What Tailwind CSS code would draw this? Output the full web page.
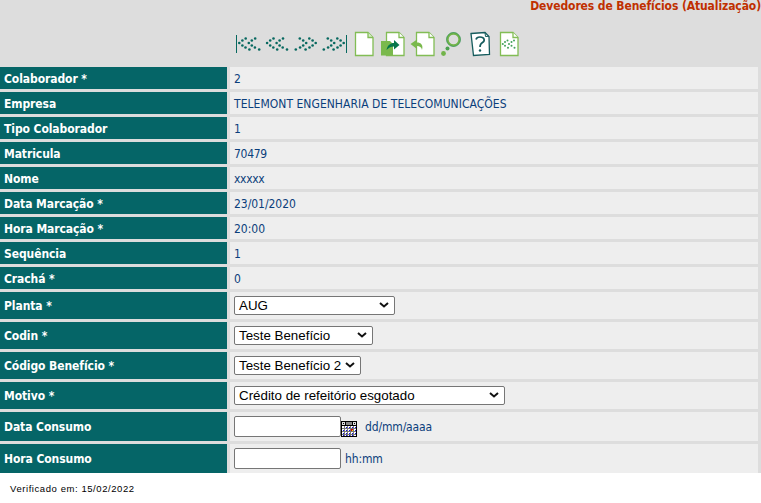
<!DOCTYPE html>
<html lang="pt-BR">
<head>
<meta charset="utf-8">
<title>Devedores de Benefícios</title>
<script src="https://cdn.jsdelivr.net/npm/@tailwindcss/browser@4"></script>
</head>
<body class="h-[503px] w-[761px] overflow-hidden bg-white font-['DejaVu_Sans_Condensed','DejaVu_Sans',sans-serif] text-xs leading-4 [font-stretch:condensed]">
<main class="flex h-[473px] flex-col bg-[#dddddd]">
  <h1 class="flex h-[29px] shrink-0 justify-end whitespace-nowrap font-bold leading-3 text-[#c03000]"><span class="tracking-[-0.1px]">Devedores de Benefícios (Atualização)</span></h1>
  <nav class="flex h-[38px] shrink-0 items-start pl-[235px]">
    <svg class="h-8 w-[290px] shrink-0" viewBox="235 29 290 32" fill="none">
      <path d="M236.500 35v18M346.500 35v18" stroke="#07685f"/>
      <g fill="#07685f">
        <g id="dots"><circle cx="245.700" cy="38.500" r="1.300"/><circle cx="242.400" cy="40.500" r="1.300"/><circle cx="239.300" cy="43" r="1.300"/><circle cx="242.400" cy="45.500" r="1.300"/><circle cx="245.500" cy="47.500" r="1.300"/><circle cx="249.400" cy="49.500" r="1.300"/><circle cx="255.200" cy="38.500" r="1.300"/><circle cx="251.800" cy="40.500" r="1.300"/><circle cx="248.800" cy="43" r="1.300"/><circle cx="251.800" cy="45.500" r="1.300"/><circle cx="254.900" cy="47.500" r="1.300"/><circle cx="259.200" cy="49.500" r="1.300"/></g>
        <use href="#dots" x="27.800"/>
        <use href="#dots" transform="translate(555 0) scale(-1 1)"/>
        <use href="#dots" transform="translate(583 0) scale(-1 1)"/>
      </g>
      <g fill="#fff" stroke="#82bd55" stroke-width="1.300">
        <path d="M355.500 32.500H368l5 5V55.500H355.500Z"/><path d="M368 32.500V37.500H373" fill="#d8edca"/>
        <path d="M386.500 32.500H399l5 5V55.500H386.500Z"/><path d="M399 32.500V37.500H404"/>
        <path d="M416.500 32.500H429l5 5V55.500H416.500Z"/><path d="M429 32.500V37.500H434"/>
        <path d="M500.500 32.500H513l5 5V55.500H500.500Z"/><path d="M513 32.500V37.500H518"/>
      </g>
      <path fill="#7ab94d" d="M381 41h9l3 3v11.500h-12z"/>
      <path fill="#07774a" d="M386.500 50c1-5 4-7 7.500-7v-3l5.500 5-5.500 4.500v-3c-3 0-5 1-7.500 3.500z"/>
      <path fill="#7ab94d" d="M422 50c-.5-3-2.500-4-5-4v3l-6.500-5 6.500-4.500v3c4 0 6.500 2.500 5 7.500z"/>
      <circle cx="453.500" cy="39.500" r="6" fill="#ddd" stroke="#72b44a" stroke-width="2.300"/><circle cx="453.500" cy="39.500" r="7" stroke="#24885b" stroke-width=".6"/>
      <circle cx="447.500" cy="48.500" r="2" fill="#4ba150"/><circle cx="443.500" cy="53.500" r="2.400" fill="#72b44a"/>
      <path fill="#fff" stroke="#165c5d" stroke-width="1.300" d="m471 33.500 14-1 4 4 .5 18-16 1z"/><path stroke="#165c5d" d="m485 32.500.5 4 3.500-.2"/>
      <path stroke="#165c5d" stroke-width="1.700" d="M476 39.500c.5-2 2-2.500 4-2.500 5 0 5 4 2.500 5.500-2 1.200-2.500 2-2.500 4.500"/><circle cx="480" cy="50.500" r="1.200" fill="#165c5d"/>
      <g fill="#43a15b"><circle cx="507.500" cy="40.500" r="1"/><circle cx="505" cy="42" r="1"/><circle cx="502.800" cy="44" r="1"/><circle cx="505" cy="45.800" r="1"/><circle cx="508" cy="47.800" r="1"/><circle cx="514" cy="40.500" r="1"/><circle cx="511.500" cy="42" r="1"/><circle cx="509" cy="44" r="1"/><circle cx="511.500" cy="45.800" r="1"/><circle cx="514.500" cy="47.800" r="1"/></g>
    </svg>
  </nav>
  <form id="rows" class="mr-[3px] flex flex-col gap-[3px]"></form>
</main>
<footer class="flex h-[30px] items-center pl-2.5 pt-px font-['Liberation_Sans',Arial,sans-serif] text-[9.500px] leading-3 tracking-[0.57px] text-black"><span class="whitespace-nowrap">Verificado em: 15/02/2022</span></footer>
<script>
const text = (v, cls = 'tracking-[-0.3px]') => `<span class="mt-px whitespace-nowrap ${cls}">${v}</span>`;
const select = (v, w) => `<div class="-mt-px flex h-[19px] items-center justify-between rounded-[2px] border border-[#767676] bg-white pl-1 pr-[5px] font-['Liberation_Sans',Arial,sans-serif] text-[13.333px] leading-4 text-black" style="width:${w}px"><span class="mt-px whitespace-nowrap">${v}</span><svg class="h-1.5 w-2.5 shrink-0" viewBox="0 0 10 6" fill="none"><path d="M1 1l4 3.500L9 1" stroke="#111" stroke-width="2"/></svg></div>`;
const input = '<div class="h-[21px] w-[107px] rounded-[2px] border border-[#767676] bg-white"></div>';
const calendar = `<svg class="mt-[4px] size-4" viewBox="0 0 16 16" shape-rendering="crispEdges"><path fill="#000" d="M0 0h16v16H0z"/><path fill="#888" d="M5 1h6v3H5z"/><path fill="#ddd" d="M1 1h3v3H1zM12 1h3v3h-3z"/><path fill="#000" d="M2 2h1v1H2zM13 2h1v1h-1z"/><path fill="#777" d="M1 5h14v10H1z"/><path d="M1 6h14M1 9h14M1 12h14" stroke="#fff" stroke-width="2" stroke-dasharray="2 1"/><path d="M1 14.500h14" stroke="#fff" stroke-dasharray="2 1"/><path d="M5 6.500h10M2 9.500h13M2 12.500h13M2 14.500h10" stroke="#1010e0" stroke-dasharray="1 2"/><path fill="#e00000" d="M10 8h2v2h-2z"/><path fill="#ffe000" d="M11 9h1v1h-1z"/></svg>`;
const short = 'h-[22px]', mid = 'h-[27px]', tall = 'h-[29px]';
const rows = [
 ['Colaborador *', text('2'), short], ['Empresa', text('TELEMONT ENGENHARIA DE TELECOMUNICAÇÕES', 'tracking-[0.04px]'), short],
 ['Tipo Colaborador', text('1'), short], ['Matricula', text('70479'), short], ['Nome', text('xxxxx'), short],
 ['Data Marcação *', text('23/01/2020', 'tracking-[-0.04px]'), short], ['Hora Marcação *', text('20:00', 'tracking-[0px]'), short],
 ['Sequência', text('1'), short], ['Crachá *', text('0'), short],
 ['Planta *', select('AUG', 161), mid], ['Codin *', select('Teste Benefício', 139), mid],
 ['Código Benefício *', select('Teste Benefício 2', 127), mid], ['Motivo *', select('Crédito de refeitório esgotado', 271), mid],
 ['Data Consumo', input + calendar + text('dd/mm/aaaa', 'ml-2 tracking-[-0.15px]'), tall],
 ['Hora Consumo', input + text('hh:mm', 'ml-1 tracking-[-0.15px]'), tall]
];
document.getElementById('rows').innerHTML = rows.map(([label, content, h]) => `<div class="flex gap-[3px] ${h}"><div class="flex w-[227px] shrink-0 items-center bg-[#056567] pl-1 pt-px font-bold text-white"><span class="whitespace-nowrap tracking-[-0.08px]">${label}</span></div><div class="flex flex-1 items-center bg-[#eeeeee] pl-1 text-[#0b3e7b]">${content}</div></div>`).join('');
</script>
</body>
</html>
